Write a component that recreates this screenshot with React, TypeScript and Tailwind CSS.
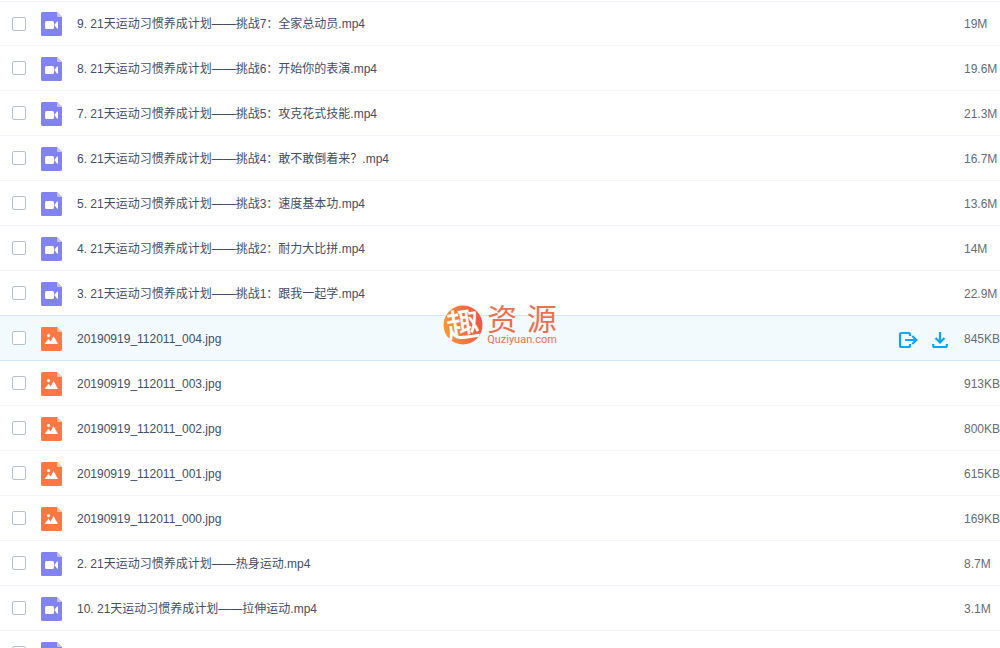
import { useState } from 'react'

type FileKind = 'video' | 'image'

interface FileItem {
  id: number
  kind: FileKind
  name: string
  size: string
}

const FILES: FileItem[] = [
  { id: 1, kind: 'video', name: '9. 21天运动习惯养成计划——挑战7：全家总动员.mp4', size: '19M' },
  { id: 2, kind: 'video', name: '8. 21天运动习惯养成计划——挑战6：开始你的表演.mp4', size: '19.6M' },
  { id: 3, kind: 'video', name: '7. 21天运动习惯养成计划——挑战5：攻克花式技能.mp4', size: '21.3M' },
  { id: 4, kind: 'video', name: '6. 21天运动习惯养成计划——挑战4：敢不敢倒着来？.mp4', size: '16.7M' },
  { id: 5, kind: 'video', name: '5. 21天运动习惯养成计划——挑战3：速度基本功.mp4', size: '13.6M' },
  { id: 6, kind: 'video', name: '4. 21天运动习惯养成计划——挑战2：耐力大比拼.mp4', size: '14M' },
  { id: 7, kind: 'video', name: '3. 21天运动习惯养成计划——挑战1：跟我一起学.mp4', size: '22.9M' },
  { id: 8, kind: 'image', name: '20190919_112011_004.jpg', size: '845KB' },
  { id: 9, kind: 'image', name: '20190919_112011_003.jpg', size: '913KB' },
  { id: 10, kind: 'image', name: '20190919_112011_002.jpg', size: '800KB' },
  { id: 11, kind: 'image', name: '20190919_112011_001.jpg', size: '615KB' },
  { id: 12, kind: 'image', name: '20190919_112011_000.jpg', size: '169KB' },
  { id: 13, kind: 'video', name: '2. 21天运动习惯养成计划——热身运动.mp4', size: '8.7M' },
  { id: 14, kind: 'video', name: '10. 21天运动习惯养成计划——拉伸运动.mp4', size: '3.1M' },
  { id: 15, kind: 'video', name: '', size: '' },
]

function FileIcon({ kind }: { kind: FileKind }) {
  const isVideo = kind === 'video'
  return (
    <svg width="21" height="24" viewBox="0 0 21 24" className="shrink-0" aria-hidden="true">
      <path d="M1.500 0H16l5 5v17.500a1.500 1.500 0 0 1-1.500 1.500h-18A1.500 1.500 0 0 1 0 22.500v-21A1.500 1.500 0 0 1 1.500 0z" fill={isVideo ? '#8183f1' : '#ff7843'} />
      <path d="M16 0l5 5h-4a1 1 0 0 1-1-1z" fill={isVideo ? '#c5c6fa' : '#ffc5ad'} />
      {isVideo ? (
        <g fill="#fff">
          <rect x="4" y="9" width="9" height="8" rx="1.6" />
          <path d="M13.6 12.4L16 9.6q1-.6 1 .4v6q0 1-1 .4l-2.4-2.8z" />
        </g>
      ) : (
        <g fill="#fff">
          <circle cx="7.5" cy="8.6" r="1.6" />
          <path d="M3.6 17l3.8-5.2 2.2 2.6L12.6 9 17 17z" />
        </g>
      )}
    </svg>
  )
}

function ShareIcon() {
  return (
    <svg width="20" height="18" viewBox="0 0 20 18" fill="none" stroke="#0ba5fb" strokeWidth="2.2" aria-hidden="true">
      <path d="M12 5V3.500A1.500 1.500 0 0 0 10.500 2h-7A1.500 1.500 0 0 0 2 3.500v11A1.500 1.500 0 0 0 3.500 16h7a1.500 1.500 0 0 0 1.500-1.500V13" />
      <path d="M7 9H18M14.300 5l4 4-4 4" />
    </svg>
  )
}

function DownloadIcon() {
  return (
    <svg width="16" height="18" viewBox="0 0 16 18" fill="none" stroke="#0ba5fb" strokeWidth="2.2" aria-hidden="true">
      <path d="M8 1v10.500M3.500 7L8 11.500 12.500 7" />
      <path d="M1.200 13v1.500A1.500 1.500 0 0 0 2.700 16h10.600a1.500 1.500 0 0 0 1.500-1.500V13" />
    </svg>
  )
}

function Watermark() {
  return (
    <div className="pointer-events-none absolute inset-0 flex items-center justify-center">
      <div className="flex items-center gap-1 text-[#ea7150]">
        <svg width="40" height="40" viewBox="0 0 40 40" className="mt-0.5 overflow-visible" aria-hidden="true">
          <defs>
            <linearGradient id="logo-fill" x1="0" y1="0.6" x2="1" y2="0.4">
              <stop offset="0" stopColor="#f79a32" />
              <stop offset="1" stopColor="#f0524a" />
            </linearGradient>
          </defs>
          <circle cx="20" cy="20" r="19.5" fill="url(#logo-fill)" />
          <text
            x="20"
            y="32"
            textAnchor="middle"
            fontSize="33"
            fontWeight="500"
            fill="#fff"
            transform="rotate(-8 20 20)"
            className="font-['Noto_Sans_CJK_SC',sans-serif]"
          >
            趣
          </text>
        </svg>
        <div className="flex flex-col pt-1 font-['Roboto','Noto_Sans_CJK_SC',sans-serif]">
          <div className="flex justify-between text-[30px] leading-7">
            <span>资</span>
            <span>源</span>
          </div>
          <span className="text-[11px] leading-3">Quziyuan.com</span>
        </div>
      </div>
    </div>
  )
}

export default function App() {
  const [checked, setChecked] = useState<number[]>([])
  const [activeId, setActiveId] = useState(8)

  const handleToggle = (id: number) => {
    setChecked(checked.includes(id) ? checked.filter(item => item !== id) : [...checked, id])
  }

  // 高亮行的上边线由前一行的下边线显示
  const getBorder = (index: number) => {
    const isActive = FILES[index].id === activeId || FILES[index + 1]?.id === activeId
    return isActive ? 'border-[#cfe8fb]' : 'border-[#f1f4fa]'
  }

  return (
    <main
      lang="zh-CN"
      className="relative h-screen overflow-hidden bg-white pt-px text-xs text-[#424e67] font-['Liberation_Sans','Noto_Sans_CJK_SC',sans-serif]"
    >
      <table className="w-full border-separate border-spacing-0">
        <tbody>
          {FILES.map((file, index) => {
            const cell = `h-[45px] border-b p-0 align-middle first:pl-3 ${index === 0 ? 'border-t' : ''} ${getBorder(index)}`
            return (
              <tr
                key={file.id}
                className={file.id === activeId ? 'bg-[#f3fafe]' : ''}
                onMouseEnter={() => setActiveId(file.id)}
              >
                <td className={`${cell} w-[41px]`}>
                  <input
                    id={`file-${file.id}`}
                    type="checkbox"
                    aria-label={file.name || undefined}
                    checked={checked.includes(file.id)}
                    onChange={() => handleToggle(file.id)}
                    className="block size-[14px] appearance-none rounded-xs border border-[#b4c0d2] bg-white checked:bg-[#0ba5fb]"
                  />
                </td>
                <td className={cell}>
                  <label htmlFor={`file-${file.id}`} className="flex items-center gap-[15px] pt-px">
                    <FileIcon kind={file.kind} />
                    <span className="whitespace-nowrap">{file.name}</span>
                  </label>
                </td>
                <td className={`${cell} w-[66px]`}>
                  {file.id === activeId && (
                    <div className="flex items-center gap-3.5 pt-[3px]">
                      <button type="button" aria-label="分享">
                        <ShareIcon />
                      </button>
                      <button type="button" aria-label="下载">
                        <DownloadIcon />
                      </button>
                    </div>
                  )}
                </td>
                <td className={`${cell} w-[35px] whitespace-nowrap text-[#666b75]`}>
                  <div className="pt-px">{file.size}</div>
                </td>
              </tr>
            )
          })}
        </tbody>
      </table>
      <Watermark />
    </main>
  )
}
